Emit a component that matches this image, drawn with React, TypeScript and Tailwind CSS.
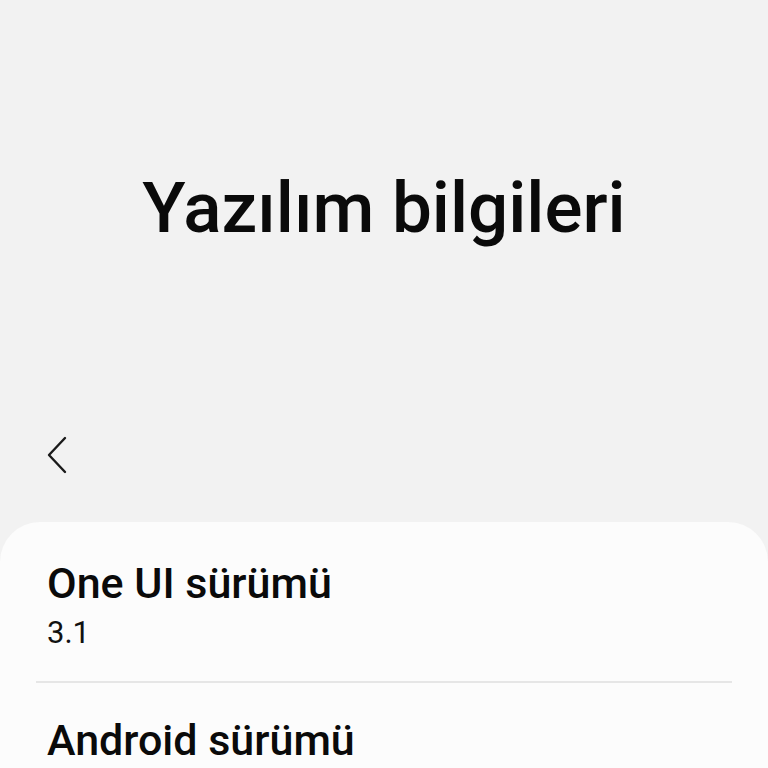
export default function App() {
  return (
    <div className="w-[768px] h-[768px] bg-[#f2f2f2] overflow-hidden flex flex-col" style={{ fontFamily: "Roboto, 'Noto Sans', sans-serif" }}>
      <div className="h-[420px] flex items-center justify-center">
        <h1 className="text-[71px] font-medium text-[#0a0a0a] tracking-[0px] mt-[-4px]">Yazılım bilgileri</h1>
      </div>
      <div className="h-[102px] pl-[46px] pt-[16px]">
        <svg width="24" height="38" viewBox="0 0 24 38" fill="none">
          <path d="M19 2 L3 19 L19 36" stroke="#1a1a1a" strokeWidth="2.4" strokeLinecap="round" strokeLinejoin="round" />
        </svg>
      </div>
      <div className="flex-1 bg-[#fcfcfc] rounded-t-[40px] px-[36px]">
        <div className="px-[11px] pt-[37px] pb-[28px]">
          <div className="text-[43px] font-medium text-[#0a0a0a] leading-[48px]">One UI sürümü</div>
          <div className="text-[31px] text-[#111] leading-[40px] mt-[6px]">3.1</div>
        </div>
        <div className="h-[2px] bg-[#e6e6e6]" />
        <div className="px-[11px] pt-[33px]">
          <div className="text-[43px] font-medium text-[#0a0a0a] leading-[48px]">Android sürümü</div>
        </div>
      </div>
    </div>
  );
}
